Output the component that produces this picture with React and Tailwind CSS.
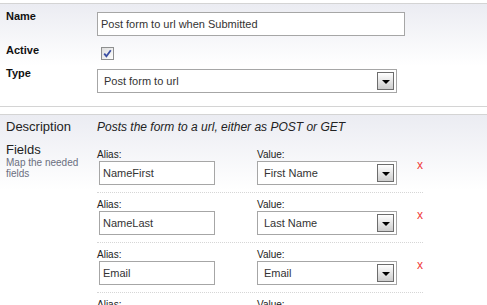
import React from "react";

function Arrow() {
  return (
    <div className="w-[17px] h-[18px] border border-[#6d6d6d] bg-gradient-to-b from-white to-[#cdcdcd] flex items-center justify-center shrink-0">
      <div className="mt-[2px] w-0 h-0 border-l-[4px] border-r-[4px] border-t-[4px] border-l-transparent border-r-transparent border-t-black" />
    </div>
  );
}

function Select({ value, w, className = "" }) {
  return (
    <div
      className={`h-[24px] border border-[#a6a6a6] bg-white flex items-center justify-between pl-[6px] pr-[2px] text-[11px] text-[#333] ${className}`}
      style={{ width: w }}
    >
      <span>{value}</span>
      <Arrow />
    </div>
  );
}

function TextInput({ value, w, className = "" }) {
  return (
    <div
      className={`h-[24px] border border-[#a6a6a6] bg-white flex items-center pl-[3px] text-[11px] text-[#333] ${className}`}
      style={{ width: w }}
    >
      {value}
    </div>
  );
}

function FieldRow({ alias, value }) {
  return (
    <div className="flex items-start pt-[7px] pb-[7px] border-b border-dotted border-[#d6d6d6] w-[326px]">
      <div className="w-[160px] shrink-0">
        <div className="h-[10px] leading-[10px] text-[10px] text-[#222]">Alias:</div>
        <TextInput value={alias} w={116} className="mt-[1px] ml-[2px]" />
      </div>
      <div className="shrink-0">
        <div className="h-[10px] leading-[10px] text-[10px] text-[#222]">Value:</div>
        <Select value={value} w={140} className="mt-[1px]" />
      </div>
      <div className="ml-[20px] mt-[9px] text-[12px] leading-[12px] text-[#f03a3a]">x</div>
    </div>
  );
}

export default function App() {
  return (
    <div className="w-[487px] h-[305px] overflow-hidden bg-white pt-[3px] font-['Liberation_Sans',Arial,sans-serif] text-[#111]">
      {/* Section 1 */}
      <div className="border-t border-b border-[#d4d4d4] bg-[linear-gradient(to_bottom,#ebecf2,#ffffff_62px)] pb-[13px]">
        <div className="flex items-start pt-[6px]">
          <div className="w-[97px] pl-[6px] text-[11px] leading-[13px] font-bold">Name</div>
          <TextInput value="Post form to url when Submitted" w={308} className="mt-[2px]" />
        </div>
        <div className="flex items-start pt-[8px]">
          <div className="w-[97px] pl-[6px] text-[11px] leading-[13px] font-bold">Active</div>
          <svg width="13" height="13" viewBox="0 0 13 13" className="mt-[3px] ml-[4px]">
            <defs>
              <linearGradient id="cbg" x1="0" y1="0" x2="1" y2="1">
                <stop offset="0" stopColor="#dcdcdc" />
                <stop offset="1" stopColor="#ffffff" />
              </linearGradient>
            </defs>
            <rect x="0.5" y="0.5" width="12" height="12" fill="url(#cbg)" stroke="#8e8f8f" />
            <path d="M3.2 6.6 L5.4 9.2 L9.8 3.2" fill="none" stroke="#3b4fa3" strokeWidth="1.8" />
          </svg>
        </div>
        <div className="flex items-start pt-[7px]">
          <div className="w-[97px] pl-[6px] text-[11px] leading-[13px] font-bold">Type</div>
          <Select value="Post form to url" w={300} className="mt-[2px]" />
        </div>
      </div>

      {/* Section 2 */}
      <div className="mt-[7px] border-t border-[#d4d4d4] bg-[linear-gradient(to_bottom,#ebecf2,#ffffff_75px)] h-[200px]">
        <div className="flex items-start pt-[4px]">
          <div className="w-[97px] pl-[6px] text-[13px] leading-[16px] text-[#222]">Description</div>
          <div className="text-[12px] leading-[16px] italic text-[#222]">
            Posts the form to a url, either as POST or GET
          </div>
        </div>
        <div className="flex items-start">
          <div className="w-[97px] pl-[6px] pt-[7px] shrink-0">
            <div className="text-[13px] leading-[15px] text-[#222]">Fields</div>
            <div className="text-[10px] leading-[11px] text-[#6b6f80]">Map the needed fields</div>
          </div>
          <div className="pt-[8px]">
            <FieldRow alias="NameFirst" value="First Name" />
            <FieldRow alias="NameLast" value="Last Name" />
            <FieldRow alias="Email" value="Email" />
            <FieldRow alias="" value="" />
          </div>
        </div>
      </div>
    </div>
  );
}
